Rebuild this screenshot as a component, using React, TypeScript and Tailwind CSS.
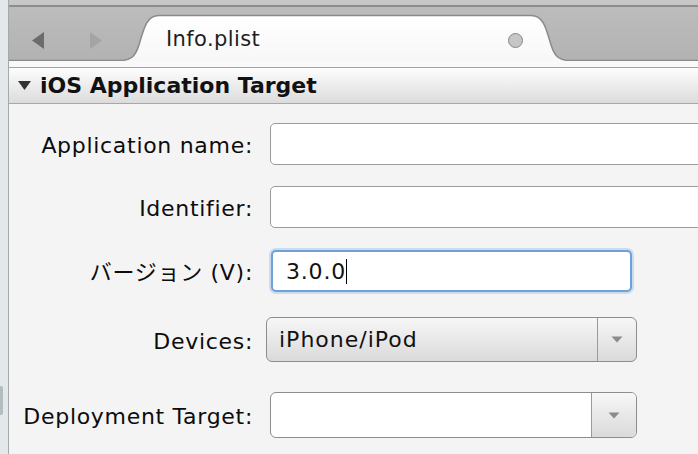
import React from 'react';

// Xcode-style Info.plist editor pane (target summary)
const font = { fontFamily: '"DejaVu Sans", "Noto Sans CJK JP", sans-serif' };

const DownArrow = () => (
    <svg width="12" height="7" viewBox="0 0 12 7">
        <path d="M0.5 0.5 H11.5 L6 6.5 Z" fill="#8c8c8c" />
    </svg>
);

const Label: React.FC<{ text: string }> = ({ text }) => (
    <div className="w-[244px] shrink-0 pt-[3px] text-right text-[22px] text-[#0c0c0c] tracking-[0.7px]">{text}</div>
);

const App: React.FC = () => {
    return (
        <div className="flex h-[454px] w-[698px] overflow-hidden bg-[#f4f4f4]" style={font}>
            {/* Sidebar edge */}
            <div className="flex w-[9px] shrink-0 flex-col border-r border-[#a5a9ab] bg-[#e3e9eb]">
                <div className="mt-[386px] h-[29px] w-[3px] rounded-r-[2px] bg-[#b3bcbf]" />
            </div>

            <div className="flex min-w-0 flex-1 flex-col">
                {/* Window top edge */}
                <div className="h-[5px] bg-[#c7c7c7]" />
                <div className="h-[2px] bg-[#8d8d8d]" />

                {/* Tab bar */}
                <div className="relative flex h-[54px] items-center bg-gradient-to-b from-[#bcbcbc] to-[#b2b2b2]">
                    <svg className="absolute inset-0" width="689" height="54" viewBox="0 0 689 54">
                        <defs>
                            <linearGradient id="tabfill" x1="0" y1="0" x2="0" y2="1">
                                <stop offset="0" stopColor="#ffffff" />
                                <stop offset="1" stopColor="#f7f7f7" />
                            </linearGradient>
                        </defs>
                        <path
                            d="M110 54 C122 54 126 50 130 38 C135 20 138 8.5 150 8.5 L522 8.5 C534 8.5 537 20 542 38 C546 50 550 54 562 54 Z"
                            fill="url(#tabfill)"
                        />
                        <path
                            d="M0 53.5 L110 53.5 C122 53.5 126 50 130 38 C135 20 138 8.5 150 8.5 L522 8.5 C534 8.5 537 20 542 38 C546 50 550 53.5 562 53.5 L689 53.5"
                            fill="none"
                            stroke="#8a8a8a"
                            strokeWidth="1.5"
                        />
                    </svg>
                    <div className="relative flex h-full w-full items-center pt-[12px]">
                        <svg className="ml-[23px]" width="12" height="17" viewBox="0 0 12 17">
                            <path d="M12 0 V17 L0 8.5 Z" fill="#6c6c6c" />
                        </svg>
                        <svg className="ml-[46px]" width="12" height="17" viewBox="0 0 12 17">
                            <path d="M0 0 V17 L12 8.5 Z" fill="#a4a4a4" />
                        </svg>
                        <span className="ml-[64px] text-[21px] tracking-[0.4px] text-[#1e1e1e]">Info.plist</span>
                        <span className="ml-[248px] h-[15px] w-[15px] rounded-full border-[1.5px] border-[#868686] bg-[#c6c6c6]" />
                    </div>
                </div>

                {/* Strip under the tab */}
                <div className="h-[7px] border-b border-[#a3a3a3] bg-[#f9f9f9]" />

                {/* Section header */}
                <div className="flex h-[36px] items-center border-b border-[#a8a8a8] bg-gradient-to-b from-[#fdfdfd] to-[#dcdcdc] pl-[9px]">
                    <svg width="13" height="9" viewBox="0 0 13 9">
                        <path d="M0 0 H13 L6.5 9 Z" fill="#333" />
                    </svg>
                    <span className="ml-[9px] text-[22px] font-bold text-[#111]">iOS Application Target</span>
                </div>

                {/* Form */}
                <div className="flex flex-col pt-[19px]">
                    <div className="flex items-center">
                        <Label text="Application name:" />
                        <div className="ml-[17px] h-[42px] w-[460px] shrink-0 rounded-[5px] border border-[#9b9b9b] bg-white" />
                    </div>

                    <div className="mt-[21px] flex items-center">
                        <Label text="Identifier:" />
                        <div className="ml-[17px] h-[42px] w-[460px] shrink-0 rounded-[5px] border border-[#9b9b9b] bg-white" />
                    </div>

                    <div className="mt-[22px] flex items-center">
                        <Label text="バージョン (V):" />
                        <div className="ml-[18px] flex h-[42px] w-[361px] shrink-0 items-center rounded-[5px] border-2 border-[#6fa0d6] bg-white pl-[13px] shadow-[0_0_0_2px_#c9dcf1] text-[22px] tracking-[0.8px] text-[#111]">
                            3.0.0
                            <span className="h-[25px] w-[1.5px] bg-black" />
                        </div>
                    </div>

                    <div className="mt-[25px] flex items-center">
                        <Label text="Devices:" />
                        <div className="ml-[13px] flex h-[45px] w-[371px] shrink-0 overflow-hidden rounded-[6px] border border-[#8d8d8d] bg-gradient-to-b from-[#f7f7f7] to-[#dadada]">
                            <span className="flex flex-1 items-center pl-[12px] text-[22px] tracking-[1px] text-[#111]">iPhone/iPod</span>
                            <span className="flex w-[39px] items-center justify-center border-l border-[#9a9a9a]">
                                <DownArrow />
                            </span>
                        </div>
                    </div>

                    <div className="mt-[30px] flex items-center">
                        <Label text="Deployment Target:" />
                        <div className="ml-[17px] flex h-[46px] w-[367px] shrink-0 overflow-hidden rounded-[6px] border border-[#8d8d8d] bg-white">
                            <span className="flex-1" />
                            <span className="flex w-[45px] items-center justify-center border-l border-[#9a9a9a] bg-gradient-to-b from-[#f7f7f7] to-[#dadada]">
                                <DownArrow />
                            </span>
                        </div>
                    </div>
                </div>
            </div>
        </div>
    );
};

export default App;
